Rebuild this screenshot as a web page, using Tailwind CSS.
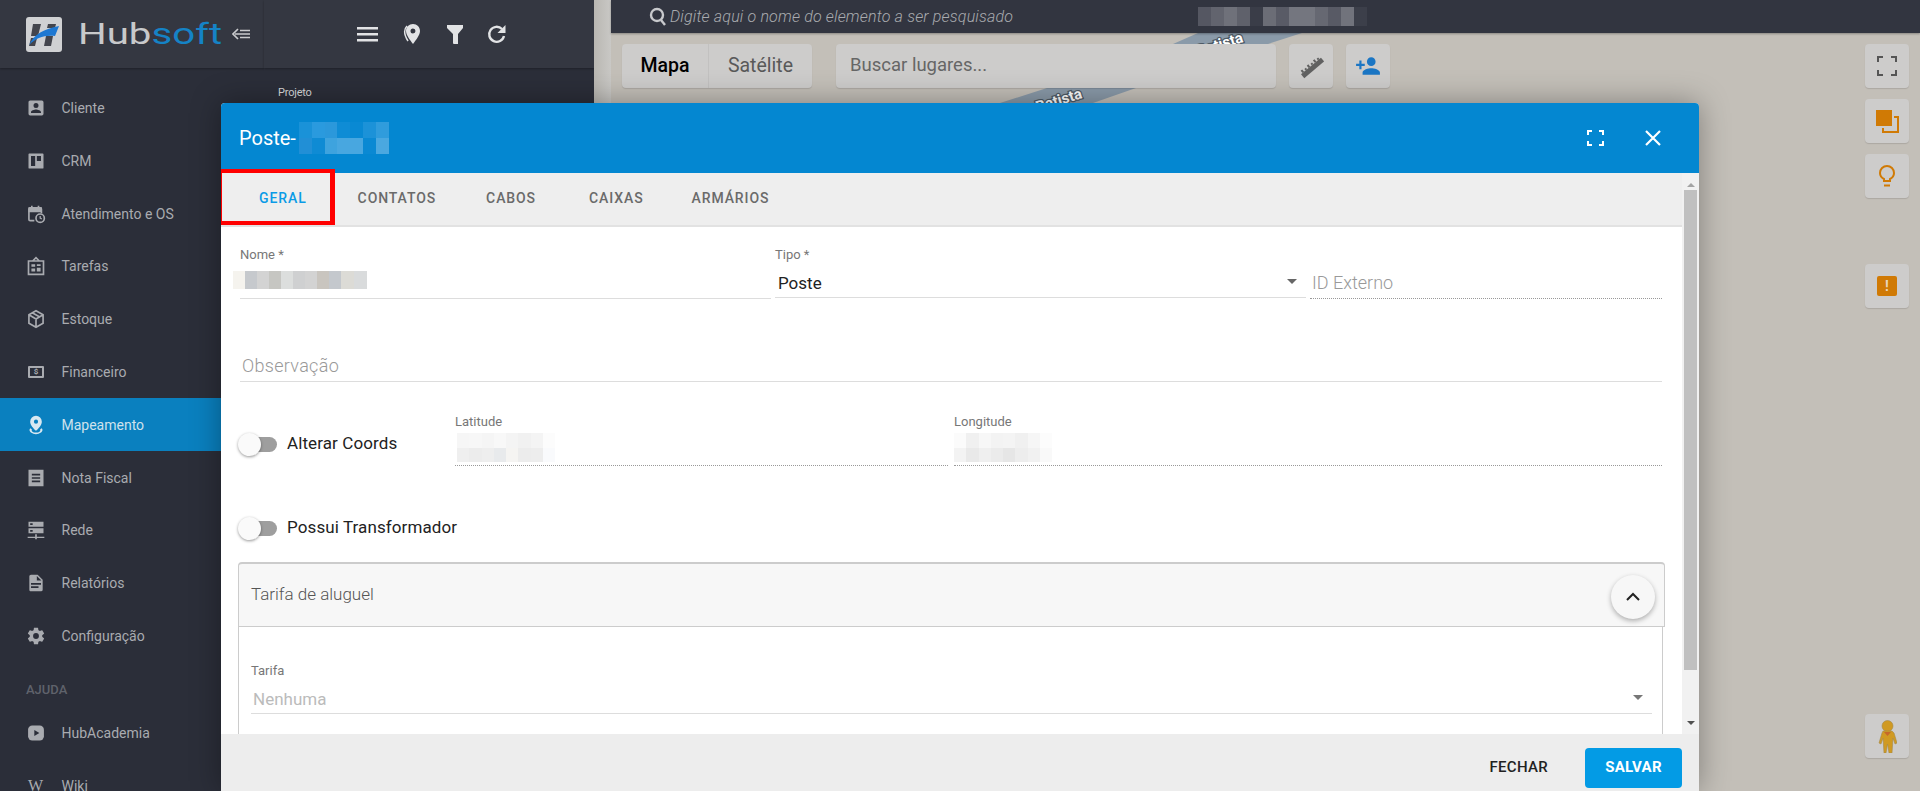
<!DOCTYPE html>
<html lang="pt-BR">
<head>
  <meta charset="UTF-8" />
  <title>Hubsoft - Mapeamento</title>
  <script src="https://cdn.jsdelivr.net/npm/@tailwindcss/browser@4"></script>
</head>
<body class="h-screen overflow-hidden bg-[#c3bfb8] font-[Roboto,sans-serif]">
<div class="relative flex h-[791px] w-[1920px] overflow-hidden">

  <!-- Sidebar -->
  <aside class="flex w-[264px] shrink-0 flex-col bg-[#2b2e39] text-[#a9abb0]">
    <div class="flex h-[68px] shrink-0 items-center bg-[#343741] pl-[26px] shadow-[0_1px_2px_rgba(0,0,0,.3)]">
      <svg class="h-[35px] w-[36px] shrink-0" viewBox="0 0 36 35">
        <rect width="36" height="35" rx="3" fill="#d0d1d3"/>
        <path d="M7 7h8l-3 12H5zM22 7h8l-1 4h-8zM5 21h6l-2 8H3zM20 19h7l-2 10h-7z" fill="#43454d"/>
        <path d="M3 28C8 17 18 12 33 9L29 19C18 18 10 21 3 28Z" fill="#1e78d2"/>
      </svg>
      <span class="ml-4 inline-block w-[103px] origin-left scale-x-[1.34] text-[30px] leading-none font-normal text-[#c8c9cb]">Hub<span class="text-[#1583c6]">soft</span></span>
      <svg class="ml-[51px] h-3 w-[18px] shrink-0" viewBox="0 0 18 12" fill="none" stroke="#c9cacd" stroke-width="1.7"><path d="M6 1 1 6l5 5M3 6h15M8 2.500h10M8 9.500h10"/></svg>
    </div>
    <nav class="relative pt-[13.6px] text-sm">
      <a class="flex h-[52.8px] items-center pl-[26px]"><svg class="mr-[15.5px] h-5 w-5" viewBox="0 0 24 24" fill="#a9abb0"><path d="M6 17c0-2 4-3.100 6-3.100s6 1.100 6 3.100v1H6m9-9a3 3 0 1 1-6 0 3 3 0 0 1 6 0M3 5v14a2 2 0 0 0 2 2h14a2 2 0 0 0 2-2V5a2 2 0 0 0-2-2H5C3.900 3 3 3.900 3 5Z"/></svg>Cliente</a>
      <a class="flex h-[52.8px] items-center pl-[26px]"><svg class="mr-[15.5px] h-5 w-5" viewBox="0 0 24 24" fill="#a9abb0"><path fill-rule="evenodd" d="M4 3h16a1 1 0 0 1 1 1v16a1 1 0 0 1-1 1H4a1 1 0 0 1-1-1V4a1 1 0 0 1 1-1Zm2 3v12h5V6Zm7 0v6h5V6Z"/></svg>CRM</a>
      <a class="flex h-[52.8px] items-center pl-[26px]"><svg class="mr-[15.5px] h-5 w-5" viewBox="0 0 24 24" fill="none" stroke="#a9abb0" stroke-width="2"><path d="M10 20H5a1.500 1.500 0 0 1-1.500-1.500V6A1.500 1.500 0 0 1 5 4.500h12A1.500 1.500 0 0 1 18.500 6v5M7 2v4M15 2v4"/><path d="M4 5h14v4H4z" fill="#a9abb0"/><circle cx="17" cy="17" r="5"/><path d="M17 14.500V17l2 1" stroke-width="1.500"/></svg>Atendimento e OS</a>
      <a class="flex h-[52.8px] items-center pl-[26px]"><svg class="mr-[15.5px] h-5 w-5" viewBox="0 0 24 24" fill="none" stroke="#a9abb0" stroke-width="2"><path d="M3 6h18v16H3zM8 6l4-4 4 4"/><path d="M6.500 10H11v3H6.500zM13 10h4.500v2H13zM6.500 15H11v3.500H6.500zM13 14h4.500v4.500H13z" fill="#a9abb0" stroke="none"/></svg>Tarefas</a>
      <a class="flex h-[52.8px] items-center pl-[26px]"><svg class="mr-[15.5px] h-5 w-5" viewBox="0 0 24 24" fill="none" stroke="#a9abb0" stroke-width="2"><path d="m12 2 8.500 5v10L12 22l-8.500-5V7zM3.500 7l8.500 5 8.500-5M12 12v10M7.500 4.500l9 5"/></svg>Estoque</a>
      <a class="flex h-[52.8px] items-center pl-[26px]"><span class="mr-[17.5px] ml-[2px] flex h-3 w-4 items-center justify-center rounded-[1px] border-2 border-[#a9abb0] text-[8px] leading-none font-bold">$</span>Financeiro</a>
      <a class="flex h-[52.8px] items-center bg-[#0a80bf] pl-[26px] text-[#cfe2ec]"><svg class="mr-[15.5px] h-5 w-5" viewBox="0 0 24 24" fill="#d8e8f1"><path fill-rule="evenodd" d="M12 1a7 7 0 0 1 7 7c0 4-4 8-7 11-3-3-7-7-7-11a7 7 0 0 1 7-7Zm0 4.500a2.500 2.500 0 1 0 0 5 2.500 2.500 0 0 0 0-5Z"/><path d="M5 16c-3 4 3 7 7 7s10-3 7-7l-2 1c1 3-2 4-5 4s-6-1-5-4z"/></svg>Mapeamento</a>
      <a class="flex h-[52.8px] items-center pl-[26px]"><svg class="mr-[15.5px] h-5 w-5" viewBox="0 0 24 24" fill="#a9abb0"><path fill-rule="evenodd" d="M3 2h18v20H3Zm4 5v2h10V7Zm0 4v2h10v-2Zm0 4v2h10v-2Z"/></svg>Nota Fiscal</a>
      <a class="flex h-[52.8px] items-center pl-[26px]"><svg class="mr-[15.5px] h-5 w-5" viewBox="0 0 24 24" fill="#a9abb0"><path fill-rule="evenodd" d="M3 2h18v6H3Zm0 8h18v6H3Zm2-6v2h3V4Zm0 8v2h3v-2Zm6 5h2v3h9v1.500h-9V23h-2v-1.500H2V20h9Z"/></svg>Rede</a>
      <a class="flex h-[52.8px] items-center pl-[26px]"><svg class="mr-[15.5px] h-5 w-5" viewBox="0 0 24 24" fill="#a9abb0"><path d="M13 9h5.500L13 3.500V9M6 2h8l6 6v12a2 2 0 0 1-2 2H6c-1.100 0-2-.9-2-2V4c0-1.100.9-2 2-2m9 16v-2H6v2h9m3-4v-2H6v2h12Z"/></svg>Relatórios</a>
      <a class="flex h-[52.8px] items-center pl-[26px]"><svg class="mr-[15.5px] h-5 w-5" viewBox="0 0 24 24" fill="#a9abb0"><path d="M12 15.500A3.500 3.500 0 0 1 8.500 12 3.500 3.500 0 0 1 12 8.500a3.500 3.500 0 0 1 3.500 3.500 3.500 3.500 0 0 1-3.500 3.500m7.430-2.530c.04-.32.07-.64.07-.97s-.03-.66-.07-1l2.110-1.630c.19-.15.24-.42.12-.64l-2-3.460c-.12-.22-.39-.31-.61-.22l-2.490 1c-.52-.39-1.060-.73-1.690-.98l-.37-2.650A.506.506 0 0 0 14 2h-4c-.25 0-.46.18-.5.42l-.37 2.650c-.63.25-1.170.59-1.690.98l-2.490-1c-.22-.09-.49 0-.61.22l-2 3.460c-.13.22-.07.49.12.64L4.570 11c-.04.34-.07.67-.07 1s.03.65.07.97l-2.110 1.660c-.19.15-.25.42-.12.64l2 3.460c.12.22.39.3.61.22l2.490-1.010c.52.4 1.060.74 1.690.99l.37 2.650c.04.24.25.42.5.42h4c.25 0 .46-.18.5-.42l.37-2.650c.63-.26 1.170-.59 1.690-.99l2.490 1.010c.22.08.49 0 .61-.22l2-3.460c.12-.22.07-.49-.12-.64l-2.110-1.660Z"/></svg>Configuração</a>
      <div class="flex h-[44px] items-center pt-3 pl-[26px] text-[13px] font-medium text-[#5f626b]">AJUDA</div>
      <a class="flex h-[52.8px] items-center pl-[26px]"><svg class="mr-[15.5px] h-5 w-5" viewBox="0 0 24 24"><rect x="2.500" y="3" width="19" height="18" rx="5" fill="#a9abb0"/><path d="m10 8.500 6 3.500-6 3.500z" fill="#2b2e39"/></svg>HubAcademia</a>
      <a class="flex h-[52.8px] items-center pl-[26px]"><span class="mr-[17.5px] ml-[2px] w-4 font-['Liberation_Serif',serif] text-base leading-none">W</span>Wiki</a>
    </nav>
  </aside>

  <!-- Filter panel -->
  <section class="w-[330px] shrink-0 bg-[#2b2e39] text-white">
    <div class="flex h-[68px] items-center bg-[#343741] pl-[93px] shadow-[0_1px_2px_rgba(0,0,0,.3)]">
      <svg class="h-[15px] w-[21px]" viewBox="0 0 21 15" fill="#e2e3e5"><path d="M0 0h21v2.500H0zM0 6h21v2.500H0zM0 12h21v2.500H0z"/></svg>
      <svg class="ml-[25px] h-[20px] w-[19px]" viewBox="0 0 19 20"><path fill-rule="evenodd" d="M10 0c4 0 7 3 7 7 0 4-4 9-7 13C7 16 3 11 3 7c0-4 3-7 7-7Zm0 4.500a2.500 2.500 0 1 0 0 5 2.500 2.500 0 0 0 0-5Z" fill="#e2e3e5"/><path d="M4 2C1 5 0 9 5 17" fill="none" stroke="#e2e3e5" stroke-width="1.500"/></svg>
      <svg class="ml-[25px] h-[19px] w-[16px]" viewBox="0 0 16 19" fill="#e2e3e5"><path d="M0 0h16v3l-5 6v10H6.500l-.5-1V9L0 3Z"/></svg>
      <svg class="ml-[23px] h-[20px] w-[21px]" viewBox="0 0 21 20" fill="none"><path d="M16 5a7.500 7.500 0 1 0 2 7" stroke="#e2e3e5" stroke-width="2.400"/><path d="M19.500 1v8h-8z" fill="#e2e3e5"/></svg>
    </div>
    <p class="mt-[18px] pl-[14px] text-[11px] leading-[14px] tracking-[-.2px] text-[#d8d9db]">Projeto</p>
  </section>

  <!-- Grey divider -->
  <div class="w-[17px] shrink-0 bg-gradient-to-r from-[#b9b7b2] to-[#c9c8c5]"></div>

  <!-- Map -->
  <main class="relative flex-1 bg-[#c3bfb8]">
    <div class="relative z-10 flex h-[33px] items-center bg-[#323540] pl-[38px] shadow-[0_1px_2px_rgba(0,0,0,.3)]">
      <svg class="h-[19px] w-[18px]" viewBox="0 0 18 19" fill="none" stroke="#c8c9cc" stroke-width="2.400"><circle cx="8" cy="8" r="6"/><path d="m12 13 4 5"/></svg>
      <span class="ml-[3px] text-base font-light tracking-[.17px] text-[#a9abaf] italic">Digite aqui o nome do elemento a ser pesquisado</span>
      <div class="ml-[185px] flex h-[19px] w-[169px]">
        <i class="w-[13px] bg-[#555762]"></i><i class="w-[13px] bg-[#62646e]"></i><i class="w-[13px] bg-[#6f717a]"></i><i class="w-[13px] bg-[#5f616b]"></i><i class="w-[13px] bg-[#3a3d48]"></i><i class="w-[13px] bg-[#6b6d76]"></i><i class="w-[13px] bg-[#595b66]"></i><i class="w-[26px] bg-[#74767f]"></i><i class="w-[13px] bg-[#666872]"></i><i class="w-[13px] bg-[#585a65]"></i><i class="w-[13px] bg-[#71737c]"></i><i class="w-[13px] bg-[#3c3f4a]"></i>
      </div>
    </div>
    <!-- roads -->
    <svg class="absolute top-[33px] left-0 h-[70px] w-[900px]" viewBox="0 0 900 70">
      <path d="M562 11 587 0h104l-34 11zM389 70l47-15h89l-43 15z" fill="#8a9aa9"/>
      <text x="633" y="9" text-anchor="end" transform="rotate(-17 633 9)" font-size="15" font-weight="700" fill="#fff" stroke="#4e5a66" stroke-width="2.500" paint-order="stroke">Batista</text>
      <text x="472" y="65" text-anchor="end" transform="rotate(-17 472 65)" font-size="15" font-weight="700" fill="#fff" stroke="#4e5a66" stroke-width="2.500" paint-order="stroke">Batista</text>
    </svg>
    <div class="relative mt-[11px] flex items-start pl-[11px]">
      <div class="flex h-[44px] w-[190px] rounded bg-[#cdcccb] text-[19.5px] shadow-[0_1px_1px_rgba(0,0,0,.12)]">
        <span class="flex w-[87px] items-center justify-center border-r border-[#c2c1c0] font-medium text-black">Mapa</span>
        <span class="flex flex-1 items-center justify-center text-[#595959]">Satélite</span>
      </div>
      <div class="ml-6 flex h-[44px] w-[440px] items-center rounded bg-[#cdcccb] pl-[14px] text-[18.5px] text-[#666] shadow-[0_1px_1px_rgba(0,0,0,.12)]">Buscar lugares...</div>
      <div class="ml-[13px] flex h-[44px] w-[44px] items-center justify-center rounded bg-[#cdcccb] shadow-[0_1px_1px_rgba(0,0,0,.12)]">
        <svg class="h-[26px] w-[26px]" viewBox="0 0 26 26" fill="#616161"><g transform="rotate(-40 13 13)"><rect x="0" y="13" width="26" height="5"/><path d="M2 10h2v3H2zM6 11h2v2H6zM10 10h2v3h-2zM14 11h2v2h-2zM18 10h2v3h-2zM22 11h2v2h-2z"/></g></svg>
      </div>
      <div class="ml-[13px] flex h-[44px] w-[44px] items-center justify-center rounded bg-[#cdcccb] shadow-[0_1px_1px_rgba(0,0,0,.12)]">
        <svg class="h-[26px] w-[26px]" viewBox="0 0 24 24" fill="#1b76c4"><path d="M15 12a4 4 0 1 0 0-8 4 4 0 0 0 0 8ZM6 10V7H4v3H1v2h3v3h2v-3h3v-2Zm9 4c-2.700 0-8 1.300-8 4v2h16v-2c0-2.700-5.300-4-8-4Z"/></svg>
      </div>
    </div>

    <!-- Right map controls -->
    <div class="absolute top-[44px] right-[11px] flex w-[44px] flex-col gap-[11px]">
      <div class="flex h-[44px] items-center justify-center rounded bg-[#cdcccb] shadow-[0_1px_1px_rgba(0,0,0,.12)]">
        <svg class="h-5 w-5" viewBox="0 0 20 20" fill="none" stroke="#555" stroke-width="2"><path d="M1 6V1h5M14 1h5v5M19 14v5h-5M6 19H1v-5"/></svg>
      </div>
      <div class="flex h-[44px] items-center justify-center rounded bg-[#cdcccb] shadow-[0_1px_1px_rgba(0,0,0,.12)]">
        <svg class="h-[23px] w-[23px]" viewBox="0 0 23 23"><rect width="16" height="16" fill="#d07a05"/><path d="M18 7h4v15H7v-4" fill="none" stroke="#d07a05" stroke-width="2"/></svg>
      </div>
      <div class="flex h-[44px] items-center justify-center rounded bg-[#cdcccb] shadow-[0_1px_1px_rgba(0,0,0,.12)]">
        <svg class="h-[22px] w-[16px]" viewBox="0 0 16 22" fill="none" stroke="#d07a05" stroke-width="2"><path d="M5 16v-2C3 13 1 11 1 8a7 7 0 0 1 14 0c0 3-2 5-4 6v2zM5 20.500h6"/></svg>
      </div>
      <div class="mt-[55px] flex h-[44px] items-center justify-center rounded bg-[#cdcccb] shadow-[0_1px_1px_rgba(0,0,0,.12)]">
        <span class="flex h-5 w-5 items-center justify-center rounded-[2px] bg-[#d07a05] text-sm leading-none font-bold text-[#e8d6bd]">!</span>
      </div>
    </div>
    <div class="absolute top-[714px] right-[11px] flex h-[44px] w-[44px] items-center justify-center rounded bg-[#cdcccb] shadow-[0_1px_1px_rgba(0,0,0,.12)]">
      <svg class="h-[33px] w-[19px]" viewBox="0 0 19 33"><circle cx="9.500" cy="6" r="5.500" fill="#d09a22" stroke="#a58a4c" stroke-width=".6"/><path d="M5 11h9l2 2 3 10-2 1-2-6-1 15H11l-1.500-9L8 33H6L5 18l-2 6-2-1 3-10Z" fill="#d09a22" stroke="#a58a4c" stroke-width=".6"/><path d="m6 12 3.500 4 3.500-4z" fill="#c6682a"/></svg>
    </div>
  </main>

  <!-- Modal -->
  <div class="absolute top-[103px] left-[221px] flex h-[688px] w-[1478px] flex-col overflow-hidden rounded-t-[4px] bg-white shadow-[0_0_30px_rgba(0,0,0,.35)]">
    <header class="flex h-[70px] shrink-0 items-center bg-[#0487d1] pl-[18px] text-white">
      <span class="text-xl">Poste-</span>
      <div class="ml-[3px] grid h-[32px] w-[90px] grid-cols-7 grid-rows-2">
        <i class="bg-[#1a92d8]"></i><i class="bg-[#2a9ade]"></i><i class="bg-[#2b98db]"></i><i class="bg-[#0f8cd5]"></i><i class="bg-[#0989d3]"></i><i class="bg-[#1c92d8]"></i><i class="bg-[#309cdc]"></i>
        <i class="bg-[#218fd6]"></i><i class="bg-[#0f8bd4]"></i><i class="bg-[#3ea3de]"></i><i class="bg-[#48a7e0]"></i><i class="bg-[#48a7e0]"></i><i class="bg-[#0a89d3]"></i><i class="bg-[#4aa8e0]"></i>
      </div>
      <svg class="ml-auto h-4 w-[17px]" viewBox="0 0 17 16" fill="none" stroke="#fff" stroke-width="2"><path d="M1 5V1h4M12 1h4v4M16 11v4h-4M5 15H1v-4"/></svg>
      <svg class="mr-[38px] ml-[41px] h-4 w-4" viewBox="0 0 16 16" fill="none" stroke="#fff" stroke-width="2.200"><path d="m1 1 14 14M15 1 1 15"/></svg>
    </header>

    <div class="relative flex min-h-0 flex-1">
      <div class="min-w-0 flex-1 overflow-hidden">
        <!-- Tabs -->
        <div class="flex h-[54px] items-center border-b-2 border-[#e2e2e2] bg-[#eeeeee] pb-[1px] text-[14px] font-medium tracking-[.9px] text-[#6a6a6a]">
          <span class="ml-[38px] text-[#0a9be6]">GERAL</span>
          <span class="ml-[51px]">CONTATOS</span>
          <span class="ml-[50px]">CABOS</span>
          <span class="ml-[53px]">CAIXAS</span>
          <span class="ml-[48px]">ARMÁRIOS</span>
        </div>

        <div class="pr-[20px] pl-[19px]">
          <!-- Nome / Tipo / ID -->
          <div class="flex h-[72px] items-end">
            <div class="w-[531px] border-b border-[#dddddd]">
              <p class="text-[13px] leading-[14px] text-[#777]">Nome *</p>
              <div class="mt-[9px] mb-[9px] -ml-[7px] flex h-[18px] w-[134px]">
                <i class="w-[12px] bg-[#f5f3ee]"></i><i class="w-[12px] bg-[#c6c9cd]"></i><i class="w-[12px] bg-[#d3d3d3]"></i><i class="w-[12px] bg-[#c6c6c2]"></i><i class="w-[12px] bg-[#dcdedd]"></i><i class="w-[12px] bg-[#cfd0d1]"></i><i class="w-[12px] bg-[#d3d3d3]"></i><i class="w-[12px] bg-[#c9c5bf]"></i><i class="w-[12px] bg-[#c4c8cd]"></i><i class="w-[13px] bg-[#dcdbd6]"></i><i class="w-[13px] bg-[#d9dbdc]"></i>
              </div>
            </div>
            <div class="relative mb-[1px] ml-1 w-[531px] border-b border-[#dddddd]">
              <p class="text-[13px] leading-[14px] text-[#777]">Tipo *</p>
              <p class="mt-[10px] mb-[3px] pl-[3px] text-[17px] leading-[22px] text-[#222]">Poste</p>
              <span class="absolute right-[9px] bottom-[13px] h-0 w-0 border-x-[5px] border-t-[5px] border-x-transparent border-t-[#666]"></span>
            </div>
            <div class="ml-1 flex-1 border-b border-dotted border-[#999]">
              <p class="mb-1 pl-[2px] text-[18px] leading-[22px] font-light text-[#999]">ID Externo</p>
            </div>
          </div>

          <!-- Observação -->
          <div class="mt-[56px] border-b border-[#dddddd] pb-[4px] pl-[2px] text-[18px] leading-[22px] font-light tracking-[.3px] text-[#999]">Observação</div>

          <!-- Coordenadas -->
          <div class="mt-[33px] flex h-[51px]">
            <label class="flex w-[215px] items-center pt-[7px] text-[17px] tracking-[.1px] text-[#222]">
              <span class="relative mr-[10px] ml-[-1px] h-[15px] w-[38px] rounded-full bg-[#9e9e9e]"><span class="absolute top-[-4px] left-[-1px] h-[23px] w-[23px] rounded-full bg-[#fafafa] shadow-[0_1px_3px_rgba(0,0,0,.4)]"></span></span>
              Alterar Coords
            </label>
            <div class="w-[493px] border-b border-dotted border-[#999]">
              <p class="text-[13px] leading-[14px] text-[#777]">Latitude</p>
              <div class="mt-[4px] ml-[2px] grid h-[29px] w-[98px] grid-cols-8 grid-rows-2">
                <i class="bg-[#f6f6f6]"></i><i class="bg-[#f7f7f7]"></i><i class="bg-[#f5f5f5]"></i><i class="bg-[#f8f8f8]"></i><i class="bg-[#f4f4f4]"></i><i class="bg-[#f1f1f1]"></i><i class="bg-[#f4f4f4]"></i><i class="bg-[#fcfcfc]"></i>
                <i class="bg-[#efefef]"></i><i class="bg-[#ececec]"></i><i class="bg-[#eeeeee]"></i><i class="bg-[#e8eaec]"></i><i class="bg-[#f5f4f2]"></i><i class="bg-[#ececec]"></i><i class="bg-[#ededed]"></i><i class="bg-[#f9fafc]"></i>
              </div>
            </div>
            <div class="ml-[6px] flex-1 border-b border-dotted border-[#999]">
              <p class="text-[13px] leading-[14px] text-[#777]">Longitude</p>
              <div class="mt-[4px] grid h-[29px] w-[98px] grid-cols-8 grid-rows-2">
                <i class="bg-[#fbfbfb]"></i><i class="bg-[#f0f0f0]"></i><i class="bg-[#f7f7f7]"></i><i class="bg-[#f3f3f3]"></i><i class="bg-[#f4f4f4]"></i><i class="bg-[#f0f0f0]"></i><i class="bg-[#f6f6f6]"></i><i class="bg-[#fcfcfc]"></i>
                <i class="bg-[#f3f3f3]"></i><i class="bg-[#e9e9e9]"></i><i class="bg-[#efefef]"></i><i class="bg-[#ebebeb]"></i><i class="bg-[#e6e6e6]"></i><i class="bg-[#ededed]"></i><i class="bg-[#f1f1f1]"></i><i class="bg-[#f9f9f9]"></i>
              </div>
            </div>
          </div>

          <!-- Transformador -->
          <label class="mt-[50px] flex h-[24px] items-center text-[17px] tracking-[.1px] text-[#222]">
            <span class="relative mr-[10px] ml-[-1px] h-[15px] w-[38px] rounded-full bg-[#9e9e9e]"><span class="absolute top-[-4px] left-[-1px] h-[23px] w-[23px] rounded-full bg-[#fafafa] shadow-[0_1px_3px_rgba(0,0,0,.4)]"></span></span>
            Possui Transformador
          </label>

          <!-- Tarifa de aluguel -->
          <div class="mt-[22px] -ml-[2px] w-[1427px]">
            <div class="flex h-[65px] items-center justify-between rounded-t-[4px] border border-t-2 border-[#cccccc] bg-[#f7f7f7] pr-[9px] pl-[12px]">
              <span class="text-[17px] font-light text-[#555]">Tarifa de aluguel</span>
              <button class="mt-1 flex h-[44px] w-[44px] items-center justify-center rounded-full bg-[#f7f7f7] shadow-[0_2px_5px_rgba(0,0,0,.3)]">
                <svg class="h-[10px] w-[14px]" viewBox="0 0 14 10" fill="none" stroke="#222" stroke-width="2"><path d="m1 8 6-6 6 6"/></svg>
              </button>
            </div>
            <div class="mr-[2px] h-[120px] border-x border-[#cccccc] pt-[37px] pr-[10px] pl-[12px]">
              <p class="text-[13px] leading-[14px] text-[#777]">Tarifa</p>
              <div class="relative mt-[10px] border-b border-[#dddddd] pb-[3px] pl-[2px] text-[17px] leading-[22px] text-[#bbb]">Nenhuma
                <span class="absolute right-[9px] bottom-[13px] h-0 w-0 border-x-[5px] border-t-[5px] border-x-transparent border-t-[#777]"></span>
              </div>
            </div>
          </div>
        </div>
      </div>

      <!-- Scrollbar -->
      <div class="flex w-[17px] shrink-0 flex-col items-center bg-[#f1f1f1]">
        <span class="mt-[10px] h-0 w-0 border-x-[4px] border-b-[4px] border-x-transparent border-b-[#a3a3a3]"></span>
        <div class="mt-[3px] h-[480px] w-[13px] bg-[#c0c0c0]"></div>
        <span class="mt-[51px] h-0 w-0 border-x-[4px] border-t-[4px] border-x-transparent border-t-[#505050]"></span>
      </div>

      <!-- Highlight around the tab -->
      <div class="absolute top-[-4px] left-[-4px] h-[56px] w-[118px] border-x-[5px] border-y-4 border-[#ff0000]"></div>
    </div>

    <footer class="flex h-[57px] shrink-0 items-center justify-end bg-[#ededed] pt-[10px] pr-[17px] text-[15px] font-medium tracking-[.3px]">
      <span class="mr-[37px] text-[#222]">FECHAR</span>
      <button class="h-[40px] w-[97px] rounded bg-[#039be5] font-bold text-white">SALVAR</button>
    </footer>
  </div>
</div>
</body>
</html>
